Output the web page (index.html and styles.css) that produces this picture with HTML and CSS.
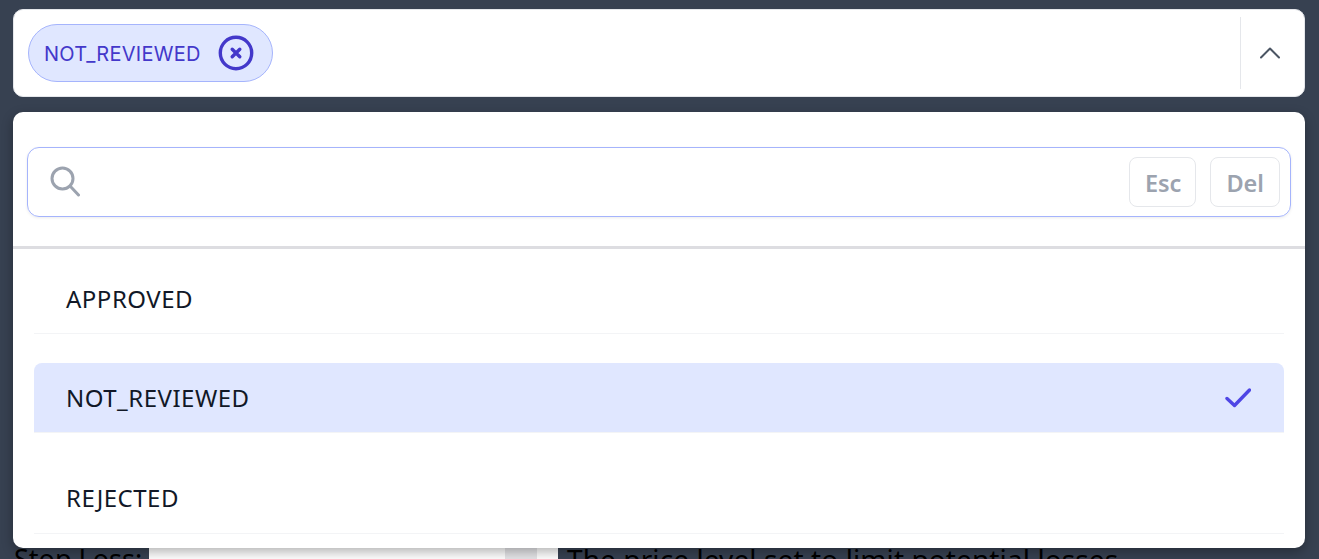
FILE: index.html
```html
<!DOCTYPE html>
<html lang="en">
<head>
    <meta charset="UTF-8">
    <title>Review status</title>
    <link rel="stylesheet" href="styles.css">
</head>
<body>
    <div class="select-box">
        <div class="select-control">
            <div class="chip">
                <span>NOT_REVIEWED</span>
                <svg class="chip-icon" viewBox="0 0 36 36" fill="none" stroke="#4338ca">
                    <circle cx="18" cy="18" r="15.7" stroke-width="3.4"/>
                    <path d="M14.2 14.2l7.6 7.6M21.8 14.2l-7.6 7.6" stroke-width="3.4" stroke-linecap="round"/>
                </svg>
            </div>
            <div class="control-toggle">
                <svg class="chevron" viewBox="0 0 20 12" fill="none" stroke="#4b5563" stroke-width="2" stroke-linecap="round" stroke-linejoin="round">
                    <path d="M1 10.5l9-9 9 9"/>
                </svg>
            </div>
        </div>

        <div class="select-menu">
            <div class="search-area">
                <div class="search-box">
                    <svg class="search-icon" viewBox="0 0 30 32" fill="none" stroke="#9ca3af" stroke-width="3" stroke-linecap="round">
                        <circle cx="12.5" cy="12.5" r="10.5"/>
                        <path d="M20.5 20.5l8 8.5"/>
                    </svg>
                    <span class="key">Esc</span>
                    <span class="key">Del</span>
                </div>
            </div>
            <ul class="options">
                <li class="option">APPROVED</li>
                <li class="option selected">
                    <span>NOT_REVIEWED</span>
                    <svg class="check" viewBox="0 0 26 20" fill="none" stroke="#4f46e5" stroke-width="3.4" stroke-linecap="round" stroke-linejoin="round">
                        <path d="M2 10.500l7.500 7L24.500 2"/>
                    </svg>
                </li>
                <li class="option">REJECTED</li>
            </ul>
        </div>
    </div>

    <div class="form-row">
        <label class="form-label">Stop Loss:</label>
        <div class="form-input">
            <div class="spin">
                <svg viewBox="0 0 14 8" fill="none" stroke="#4b5563" stroke-width="2">
                    <path d="M1 7l6-5.500 6 5.500"/>
                </svg>
            </div>
        </div>
        <p class="form-help">The price level set to limit potential losses.</p>
    </div>
</body>
</html>
```

FILE: styles.css
```css
body {
    margin: 0;
    height: 559px;
    overflow: hidden;
    background-color: #374151;
    font-family: "Noto Sans", "Open Sans", sans-serif;
    color: #111827;
    box-sizing: border-box;
    padding: 9px 14px 0 13px;
}
.select-box {
    position: relative;
}
.select-control {
    height: 88px;
    box-sizing: border-box;
    display: flex;
    align-items: center;
    justify-content: space-between;
    padding: 8px 0 8px 14px;
    background-color: #fff;
    border: 1px solid #e5e7eb;
    border-radius: 10px;
}
.chip {
    display: flex;
    align-items: center;
    height: 58px;
    box-sizing: border-box;
    padding: 0 18px 0 15px;
    background-color: #e0e7ff;
    border: 1px solid #a5b4fc;
    border-radius: 29px;
    color: #4338ca;
    font-family: Inter, "Noto Sans", sans-serif;
    font-size: 20px;
    letter-spacing: 0.25px;
}
.chip span {
    padding-top: 2px;
}
.chip-icon {
    width: 36px;
    height: 36px;
    margin-left: 17px;
}
.control-toggle {
    height: 72px;
    width: 64px;
    box-sizing: border-box;
    padding-right: 5px;
    border-left: 1px solid #e5e7eb;
    display: flex;
    align-items: center;
    justify-content: center;
}
.chevron {
    width: 20px;
    height: 12px;
}
.select-menu {
    position: absolute;
    top: 103px;
    left: 0;
    right: 0;
    z-index: 10;
    height: 436px;
    box-sizing: border-box;
    background-color: #fff;
    border-radius: 10px;
    box-shadow: 0 4px 12px rgba(0, 0, 0, 0.3);
}
.search-area {
    height: 137px;
    box-sizing: border-box;
    padding: 35px 14px 0;
    border-bottom: 3px solid #dddde1;
}
.search-box {
    height: 70px;
    box-sizing: border-box;
    display: flex;
    align-items: center;
    justify-content: flex-end;
    gap: 14px;
    padding-right: 10px;
    border: 1px solid #a5b4fc;
    border-radius: 12px;
    box-shadow: 0 1px 3px rgba(0, 0, 0, 0.08);
}
.search-icon {
    width: 30px;
    height: 32px;
    margin-right: auto;
    margin-left: 22px;
}
.key {
    height: 50px;
    box-sizing: border-box;
    padding: 2px 15px 0 15px;
    display: flex;
    align-items: center;
    color: #9ca3af;
    font-size: 23.5px;
    font-weight: 600;
    border: 1px solid #e5e7eb;
    border-radius: 8px;
}
.key:first-of-type {
    padding: 2px 14px 0 15px;
}
.options {
    list-style: none;
    margin: 0;
    padding: 0 21px;
}
.option {
    height: 70px;
    box-sizing: border-box;
    display: flex;
    align-items: center;
    justify-content: space-between;
    padding: 0 33px 0 32px;
    font-size: 24px;
    letter-spacing: 0.5px;
    border-bottom: 1px solid #f3f4f6;
}
.option:first-child {
    margin-top: 15px;
    margin-bottom: 29px;
}
.option:last-child {
    padding-bottom: 2px;
}
.option.selected {
    margin-bottom: 31px;
    background-color: #e0e7ff;
    border-radius: 8px 8px 0 0;
}
.check {
    width: 26px;
    height: 20px;
}
.form-row {
    display: flex;
    margin-top: 441px;
    line-height: 36px;
    color: #000;
}
.form-label {
    width: 136px;
    font-size: 27px;
    padding: 3px 0 0 1px;
    box-sizing: border-box;
}
.form-input {
    width: 409px;
    height: 40px;
    padding-right: 21px;
    box-sizing: border-box;
    background-color: #fff;
    display: flex;
    justify-content: flex-end;
}
.spin {
    width: 32px;
    height: 40px;
    background-color: #e5e5e8;
    text-align: center;
}
.spin svg {
    width: 14px;
    height: 8px;
    vertical-align: top;
}
.form-help {
    margin: 0;
    padding: 3px 0 0 9px;
    font-size: 28px;
    letter-spacing: 0.1px;
    white-space: nowrap;
}
```
